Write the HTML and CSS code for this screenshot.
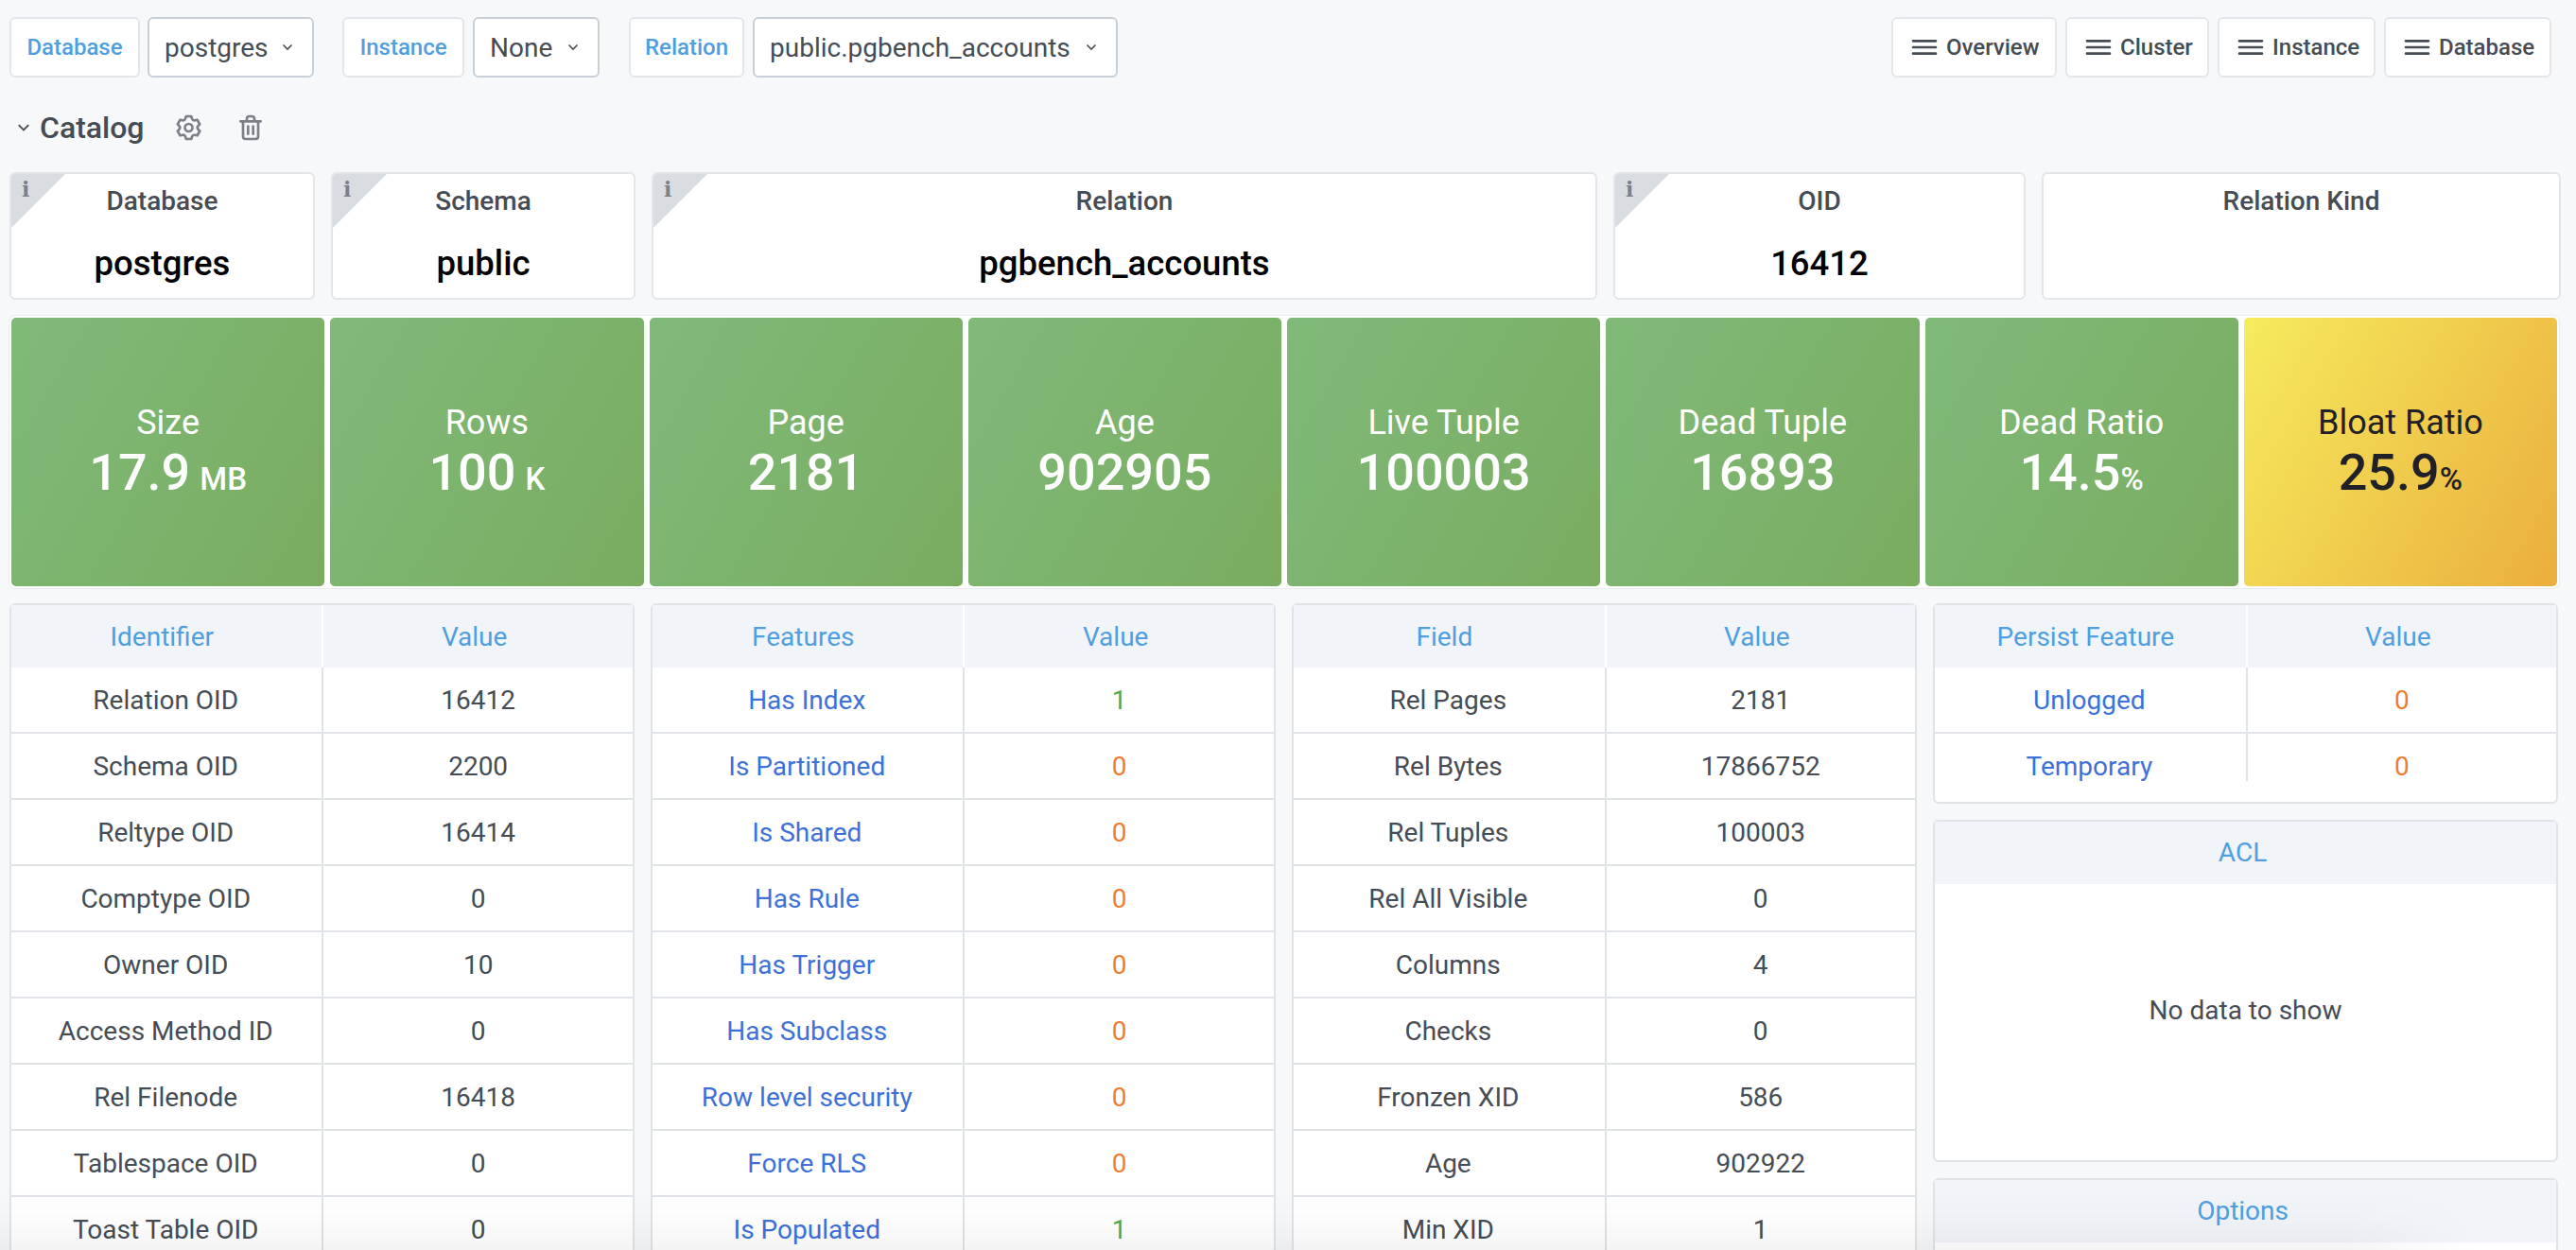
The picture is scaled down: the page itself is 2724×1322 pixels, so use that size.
FILE: index.html
```html
<!DOCTYPE html>
<html lang="en">
    <head>
        <meta charset="UTF-8" />
        <meta name="viewport" content="width=device-width, initial-scale=1.0" />
        <title>Catalog</title>
        <link rel="stylesheet" href="styles.css">
    </head>
    <body>
        <div class="page">
            <div class="toolbar">
                <div class="vars">
                    <span class="var-label">Database</span>
                    <span class="var-select var-select-db">postgres <svg class="chev" viewBox="0 0 12 8"><path d="M1.5 1.5 6 6l4.5-4.5"/></svg></span>
                    <span class="var-label var-label-inst">Instance</span>
                    <span class="var-select var-select-inst">None <svg class="chev" viewBox="0 0 12 8"><path d="M1.5 1.5 6 6l4.5-4.5"/></svg></span>
                    <span class="var-label var-label-rel">Relation</span>
                    <span class="var-select var-select-rel">public.pgbench_accounts <svg class="chev" viewBox="0 0 12 8"><path d="M1.5 1.5 6 6l4.5-4.5"/></svg></span>
                </div>
                <div class="links">
                    <a class="link-btn link-overview"><svg class="bars" viewBox="0 0 24 24"><path d="M3,8H21a1,1,0,0,0,0-2H3A1,1,0,0,0,3,8Zm18,8H3a1,1,0,0,0,0,2H21a1,1,0,0,0,0-2Zm0-5H3a1,1,0,0,0,0,2H21a1,1,0,0,0,0-2Z"/></svg>Overview</a>
                    <a class="link-btn link-cluster"><svg class="bars" viewBox="0 0 24 24"><path d="M3,8H21a1,1,0,0,0,0-2H3A1,1,0,0,0,3,8Zm18,8H3a1,1,0,0,0,0,2H21a1,1,0,0,0,0-2Zm0-5H3a1,1,0,0,0,0,2H21a1,1,0,0,0,0-2Z"/></svg>Cluster</a>
                    <a class="link-btn link-instance"><svg class="bars" viewBox="0 0 24 24"><path d="M3,8H21a1,1,0,0,0,0-2H3A1,1,0,0,0,3,8Zm18,8H3a1,1,0,0,0,0,2H21a1,1,0,0,0,0-2Zm0-5H3a1,1,0,0,0,0,2H21a1,1,0,0,0,0-2Z"/></svg>Instance</a>
                    <a class="link-btn link-database"><svg class="bars" viewBox="0 0 24 24"><path d="M3,8H21a1,1,0,0,0,0-2H3A1,1,0,0,0,3,8Zm18,8H3a1,1,0,0,0,0,2H21a1,1,0,0,0,0-2Zm0-5H3a1,1,0,0,0,0,2H21a1,1,0,0,0,0-2Z"/></svg>Database</a>
                </div>
            </div>

            <div class="row-title">
                <svg class="row-chev" viewBox="0 0 12 8"><path d="M1.5 1.5 6 6l4.5-4.5"/></svg>
                <span class="row-name">Catalog</span>
                <svg class="row-icon" viewBox="0 0 24 24"><path d="M19.9,12.66a1,1,0,0,1,0-1.32L21.18,9.9a1,1,0,0,0,.12-1.17l-2-3.46a1,1,0,0,0-1.07-.48l-1.88.38a1,1,0,0,1-1.15-.66l-.61-1.83A1,1,0,0,0,13.64,2h-4a1,1,0,0,0-1,.68L8.08,4.51a1,1,0,0,1-1.15.66L5,4.79A1,1,0,0,0,4,5.27L2,8.73A1,1,0,0,0,2.1,9.9l1.27,1.44a1,1,0,0,1,0,1.32L2.1,14.1A1,1,0,0,0,2,15.27l2,3.46a1,1,0,0,0,1.07.48l1.88-.38a1,1,0,0,1,1.15.66l.61,1.83a1,1,0,0,0,1,.68h4a1,1,0,0,0,.95-.68l.61-1.83a1,1,0,0,1,1.15-.66l1.88.38a1,1,0,0,0,1.07-.48l2-3.46a1,1,0,0,0-.12-1.17ZM18.41,14l.8.9-1.28,2.22-1.18-.24a3,3,0,0,0-3.45,2L12.92,20H10.36L10,18.86a3,3,0,0,0-3.45-2l-1.18.24L4.07,14.9l.8-.9a3,3,0,0,0,0-4l-.8-.9L5.35,6.89l1.18.24a3,3,0,0,0,3.45-2L10.36,4h2.56l.38,1.14a3,3,0,0,0,3.45,2l1.18-.24,1.28,2.22-.8.9A3,3,0,0,0,18.41,14ZM11.64,8a4,4,0,1,0,4,4A4,4,0,0,0,11.64,8Zm0,6a2,2,0,1,1,2-2A2,2,0,0,1,11.64,14Z"/></svg>
                <svg class="row-icon" viewBox="0 0 24 24"><path d="M10,18a1,1,0,0,0,1-1V11a1,1,0,0,0-2,0v6A1,1,0,0,0,10,18ZM20,6H16V5a3,3,0,0,0-3-3H11A3,3,0,0,0,8,5V6H4A1,1,0,0,0,4,8H5V19a3,3,0,0,0,3,3h8a3,3,0,0,0,3-3V8h1a1,1,0,0,0,0-2ZM10,5a1,1,0,0,1,1-1h2a1,1,0,0,1,1,1V6H10Zm7,14a1,1,0,0,1-1,1H8a1,1,0,0,1-1-1V8H17Zm-3-1a1,1,0,0,0,1-1V11a1,1,0,0,0-2,0v6A1,1,0,0,0,14,18Z"/></svg>
            </div>

            <div class="info-row">
                <div class="info-card"><span class="corner"></span><span class="corner-i">i</span><div class="info-label">Database</div><div class="info-value">postgres</div></div>
                <div class="info-card"><span class="corner"></span><span class="corner-i">i</span><div class="info-label">Schema</div><div class="info-value">public</div></div>
                <div class="info-card"><span class="corner"></span><span class="corner-i">i</span><div class="info-label">Relation</div><div class="info-value">pgbench_accounts</div></div>
                <div class="info-card"><span class="corner"></span><span class="corner-i">i</span><div class="info-label">OID</div><div class="info-value">16412</div></div>
                <div class="info-card"><div class="info-label">Relation Kind</div><div class="info-value"></div></div>
            </div>

            <div class="stat-row">
                <div class="stat"><div class="stat-name">Size</div><div class="stat-value">17.9<span class="unit unit-space">MB</span></div></div>
                <div class="stat"><div class="stat-name">Rows</div><div class="stat-value">100<span class="unit unit-space">K</span></div></div>
                <div class="stat"><div class="stat-name">Page</div><div class="stat-value">2181</div></div>
                <div class="stat"><div class="stat-name">Age</div><div class="stat-value">902905</div></div>
                <div class="stat"><div class="stat-name">Live Tuple</div><div class="stat-value">100003</div></div>
                <div class="stat"><div class="stat-name">Dead Tuple</div><div class="stat-value">16893</div></div>
                <div class="stat"><div class="stat-name">Dead Ratio</div><div class="stat-value">14.5<span class="unit">%</span></div></div>
                <div class="stat stat-warn"><div class="stat-name">Bloat Ratio</div><div class="stat-value">25.9<span class="unit">%</span></div></div>
            </div>

            <div class="tables">
                <div class="panel">
                    <table>
                        <tr><th>Identifier</th><th>Value</th></tr>
                        <tr><td>Relation OID</td><td>16412</td></tr>
                        <tr><td>Schema OID</td><td>2200</td></tr>
                        <tr><td>Reltype OID</td><td>16414</td></tr>
                        <tr><td>Comptype OID</td><td>0</td></tr>
                        <tr><td>Owner OID</td><td>10</td></tr>
                        <tr><td>Access Method ID</td><td>0</td></tr>
                        <tr><td>Rel Filenode</td><td>16418</td></tr>
                        <tr><td>Tablespace OID</td><td>0</td></tr>
                        <tr><td>Toast Table OID</td><td>0</td></tr>
                    </table>
                </div>
                <div class="panel">
                    <table>
                        <tr><th>Features</th><th>Value</th></tr>
                        <tr><td class="flag">Has Index</td><td class="on">1</td></tr>
                        <tr><td class="flag">Is Partitioned</td><td class="off">0</td></tr>
                        <tr><td class="flag">Is Shared</td><td class="off">0</td></tr>
                        <tr><td class="flag">Has Rule</td><td class="off">0</td></tr>
                        <tr><td class="flag">Has Trigger</td><td class="off">0</td></tr>
                        <tr><td class="flag">Has Subclass</td><td class="off">0</td></tr>
                        <tr><td class="flag">Row level security</td><td class="off">0</td></tr>
                        <tr><td class="flag">Force RLS</td><td class="off">0</td></tr>
                        <tr><td class="flag">Is Populated</td><td class="on">1</td></tr>
                    </table>
                </div>
                <div class="panel">
                    <table>
                        <tr><th>Field</th><th>Value</th></tr>
                        <tr><td>Rel Pages</td><td>2181</td></tr>
                        <tr><td>Rel Bytes</td><td>17866752</td></tr>
                        <tr><td>Rel Tuples</td><td>100003</td></tr>
                        <tr><td>Rel All Visible</td><td>0</td></tr>
                        <tr><td>Columns</td><td>4</td></tr>
                        <tr><td>Checks</td><td>0</td></tr>
                        <tr><td>Fronzen XID</td><td>586</td></tr>
                        <tr><td>Age</td><td>902922</td></tr>
                        <tr><td>Min XID</td><td>1</td></tr>
                    </table>
                </div>
                <div class="side">
                    <div class="panel panel-persist">
                        <div class="persist-clip">
                            <table>
                                <tr><th>Persist Feature</th><th>Value</th></tr>
                                <tr><td class="flag">Unlogged</td><td class="off">0</td></tr>
                                <tr><td class="flag">Temporary</td><td class="off">0</td></tr>
                            </table>
                        </div>
                    </div>
                    <div class="panel panel-acl">
                        <div class="panel-head">ACL</div>
                        <div class="no-data">No data to show</div>
                    </div>
                    <div class="panel panel-options">
                        <div class="panel-head">Options</div>
                    </div>
                </div>
            </div>
            <div class="bottom-fade"></div>
        </div>
    </body>
</html>
```

FILE: styles.css
```css
* {
    box-sizing: border-box;
}

body {
    margin: 0;
    font-family: Roboto, "Liberation Sans", sans-serif;
    font-size: 28px;
    color: #464c54;
    background-color: #f7f8fa;
}

.page {
    position: relative;
    height: 1322px;
    padding: 18px 16px 0 10px;
    overflow: hidden;
}

/* top bar */
.toolbar {
    display: flex;
    justify-content: space-between;
    height: 64px;
    padding-right: 10px;
}

.vars, .links {
    display: flex;
}

.var-label {
    display: flex;
    align-items: center;
    justify-content: center;
    width: 138px;
    margin-right: 8px;
    font-size: 24px;
    font-weight: 500;
    color: #4f9fe0;
    background-color: #fff;
    border: 2px solid #e3e6eb;
    border-radius: 6px;
}

.var-label-inst {
    width: 129px;
    margin-left: 30px;
    margin-right: 9px;
}

.var-label-rel {
    width: 122px;
    margin-left: 31px;
    margin-right: 9px;
}

.var-select {
    display: flex;
    align-items: center;
    justify-content: space-between;
    padding: 0 20px 0 16px;
    background-color: #fff;
    border: 2px solid #c7d0d9;
    border-radius: 6px;
}

.var-select-db {
    width: 176px;
}

.var-select-inst {
    width: 134px;
}

.var-select-rel {
    width: 386px;
}

.chev {
    width: 12px;
    height: 8px;
    fill: none;
    stroke: #464c54;
    stroke-width: 1.6;
}

.links {
    gap: 9px;
}

.link-btn {
    display: flex;
    align-items: center;
    gap: 7px;
    padding-left: 17px;
    font-size: 24px;
    font-weight: 500;
    background-color: #fff;
    border: 2px solid #e3e6eb;
    border-radius: 6px;
}

.link-overview {
    width: 175px;
}

.link-cluster {
    width: 152px;
}

.link-instance {
    width: 167px;
}

.link-database {
    width: 177px;
}

.bars {
    width: 32px;
    height: 32px;
    fill: #464c54;
}

/* row title */
.row-title {
    display: flex;
    align-items: center;
    height: 40px;
    margin-top: 33px;
    padding-left: 8px;
}

.row-chev {
    width: 14px;
    height: 10px;
    margin-right: 10px;
    fill: none;
    stroke: #464c54;
    stroke-width: 1.6;
}

.row-name {
    font-size: 32px;
    font-weight: 500;
    margin-right: 31px;
}

.row-icon {
    width: 32px;
    height: 32px;
    margin-right: 33px;
    fill: #7b8087;
}

/* info cards */
.info-row {
    display: grid;
    grid-template-columns: 323px 322px 1000px 436px 549px;
    gap: 17px;
    margin-top: 27px;
}

.info-card {
    position: relative;
    height: 135px;
    text-align: center;
    background-color: #fff;
    border: 2px solid #e3e6eb;
    border-radius: 6px;
    overflow: hidden;
}

.corner {
    position: absolute;
    top: 0;
    left: 0;
    width: 57px;
    height: 57px;
    background-color: #d9dde2;
    clip-path: polygon(0 0, 100% 0, 0 100%);
}

.corner-i {
    position: absolute;
    top: 3px;
    left: 11px;
    font-family: "DejaVu Serif", serif;
    font-size: 22px;
    font-weight: 700;
    color: #7b8087;
}

.info-label {
    margin-top: 11px;
    font-weight: 500;
    line-height: 36px;
}

.info-value {
    margin-top: 27px;
    font-size: 36.5px;
    font-weight: 500;
    line-height: 42px;
    color: #000;
}

/* stat tiles */
.stat-row {
    display: grid;
    grid-template-columns: repeat(8, 1fr);
    gap: 6px;
    width: 2696px;
    margin-top: 17px;
    padding: 2px;
    background-color: #fff;
    border-radius: 6px;
    box-shadow: 0 0 0 1px #e9ebee;
}

.stat {
    display: flex;
    flex-direction: column;
    justify-content: center;
    height: 284px;
    text-align: center;
    color: #fff;
    background: linear-gradient(120deg, #7fba79, #7aac60);
    border-radius: 5px;
}

.stat-warn {
    color: #1f2126;
    background: linear-gradient(120deg, #f6eb5d, #eaae3d);
}

.stat-name {
    font-size: 36px;
    line-height: 44px;
}

.stat-value {
    height: 62px;
    font-size: 54px;
    font-weight: 500;
    line-height: 62px;
}

.unit {
    font-size: 33px;
    line-height: 1;
}

.unit-space {
    margin-left: 10px;
}

/* tables */
.tables {
    display: grid;
    grid-template-columns: repeat(4, 1fr);
    gap: 17.2px;
    width: 2695px;
    margin-top: 16px;
}

.panel {
    background-color: #fff;
    border: 2px solid #e0e3e8;
    border-radius: 6px;
}

table {
    width: 100%;
    table-layout: fixed;
    border-collapse: separate;
    border-spacing: 0;
}

th {
    height: 66px;
    padding: 0 8px 0 0;
    font-weight: 400;
    color: #4f9fe0;
    background-color: #f1f4f9;
    border-left: 2px solid #fff;
}

th:first-child {
    padding-right: 10px;
    border-left: 0;
}

td {
    height: 70px;
    padding: 0;
    text-align: center;
    border-left: 2px solid #e0e3e8;
    border-bottom: 2px solid #e0e3e8;
}

td:first-child {
    padding-right: 2px;
    border-left: 0;
}

.flag {
    color: #3d71d9;
}

.on {
    color: #56a64b;
}

.off {
    color: #ed7d31;
}

.side {
    display: flex;
    flex-direction: column;
    gap: 17px;
}

.panel-persist {
    height: 212px;
}

.persist-clip {
    height: 186px;
    overflow: hidden;
}

.panel-acl {
    display: flex;
    flex-direction: column;
    height: 362px;
}

.panel-head {
    height: 66px;
    flex-shrink: 0;
    padding-right: 6px;
    line-height: 66px;
    text-align: center;
    color: #4f9fe0;
    background-color: #f1f4f9;
}

.no-data {
    display: flex;
    flex: 1;
    align-items: center;
    justify-content: center;
    padding-bottom: 26px;
}

.panel-options {
    height: 200px;
}

/* soft shadow along the bottom edge, dies out before the right side */
.bottom-fade {
    position: absolute;
    left: 0;
    right: 0;
    bottom: 0;
    height: 66px;
    background: linear-gradient(rgba(0, 0, 0, 0), rgba(0, 0, 0, 0.012) 50%, rgba(0, 0, 0, 0.045));
    mask-image: linear-gradient(90deg, #000 2480px, transparent 2620px);
}
```
